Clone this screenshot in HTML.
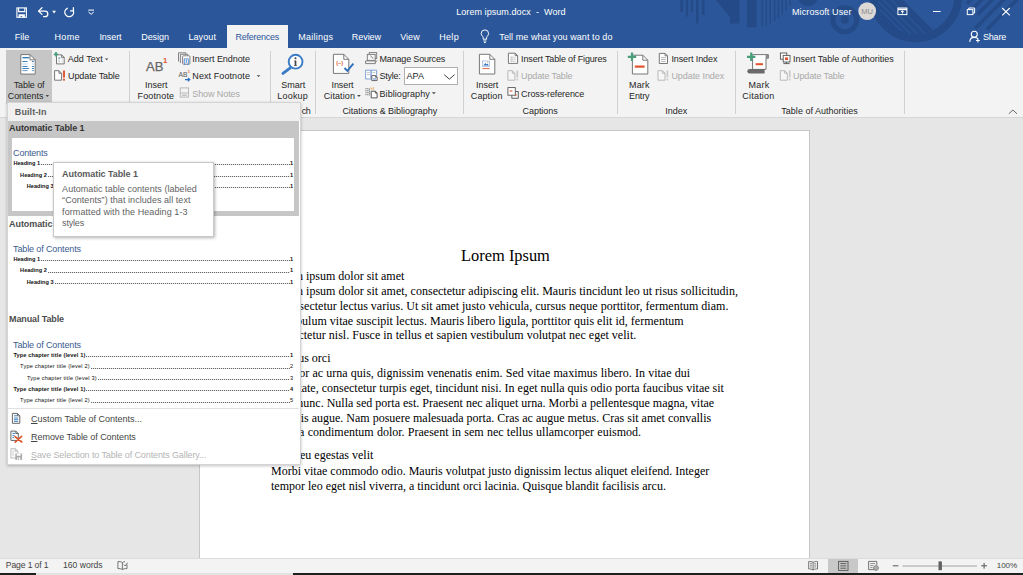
<!DOCTYPE html>
<html><head><meta charset="utf-8"><title>Lorem ipsum.docx - Word</title>
<style>
*{box-sizing:border-box;margin:0;padding:0}
html,body{width:1023px;height:575px;overflow:hidden;background:#e6e6e6}
body{position:relative;font-family:"Liberation Sans",sans-serif;font-size:9px;color:#262626}
.a{position:absolute}
.l{position:absolute;white-space:nowrap;line-height:11px;font-size:9px}
.b{font-weight:bold}
svg{position:absolute;overflow:visible}
#title{left:0;top:0;width:1023px;height:48px;background:#2b579a;overflow:hidden}
#reftab{left:227px;top:25px;width:61px;height:23px;background:#f3f3f3}
#ribbon{left:0;top:48px;width:1023px;height:70px;background:#f3f3f3;border-bottom:1px solid #d6d6d6}
.sep{position:absolute;top:51px;width:1px;height:63px;background:#d0d0d0}
#tocbtn{left:6px;top:50px;width:46px;height:54px;background:#c6c6c6}
#combo{left:404px;top:67px;width:54px;height:18px;background:#fff;border:1px solid #b0b0b0}
#page{left:199px;top:130px;width:611px;height:429px;background:#fff;border:1px solid #c6c6c6;border-bottom:none}
.t{position:absolute;white-space:nowrap;font-family:"Liberation Serif",serif;font-size:12px;line-height:14px;color:#000}
#status{left:0;top:558px;width:1023px;height:15px;background:#f3f3f3;border-top:1px solid #dcdcdc}
#plbtn{left:828px;top:559px;width:30px;height:14px;background:#c8c8c8}
.dk{position:absolute;top:573px;height:2px;background:#1f1f1f}
#dd{left:7px;top:102px;width:294px;height:363px;background:#fff;border:1px solid #d4d4d4;box-shadow:0 1px 3px rgba(0,0,0,.24)}
#ddh{left:8px;top:103px;width:292px;height:18px;background:#f0f0f0}
#sel{left:8px;top:121px;width:291px;height:95px;background:#c6c6c6}
#prev{left:12px;top:138px;width:282px;height:73px;background:#fff}
#ddsep{left:8px;top:408px;width:291px;height:1px;background:#e1e1e1}
#tt{left:53px;top:162px;width:161px;height:75px;background:#fff;border:1px solid #c8c8c8;box-shadow:1px 1px 3px rgba(0,0,0,.3)}
.h{position:absolute;white-space:nowrap;font-size:5.6px;line-height:7px;color:#111}
.dots{position:absolute;height:1px;background:repeating-linear-gradient(90deg,#666 0,#666 1px,#e4e4e4 1px,#e4e4e4 2px)}
</style></head><body>
<div id="title" class="a"><svg class="a" style="left:0;top:0" width="1023" height="48" viewBox="0 0 1023 48" ><g fill="#244b87"><rect x="680.2" y="0" width="3.0" height="12"/><rect x="685.8" y="0" width="2.4" height="16.7"/><rect x="690.8" y="0" width="2.4" height="12.3"/><rect x="696" y="0" width="2.5" height="23.4"/><rect x="702" y="0" width="2.5" height="15"/><rect x="747" y="0" width="9.6" height="27.3"/><rect x="761.5" y="0" width="1.5" height="26.4"/><rect x="765.6" y="0" width="1.4" height="25.5"/><rect x="769.6" y="0" width="1.4" height="23.8"/><rect x="773.9" y="0" width="1.4" height="21"/><rect x="777.7" y="0" width="1.5" height="18.5"/><rect x="781.6" y="0" width="1.4" height="15"/><rect x="785.5" y="0" width="1.5" height="10.5"/><rect x="789.4" y="0" width="1.4" height="5.3"/><polygon points="716,0 739.5,0 739.5,23.4 730,23.4 730,17.6"/><circle cx="808" cy="-4" r="10.2"/><circle cx="844.8" cy="19.8" r="12" fill="none" stroke="#244b87" stroke-width="5"/><circle cx="844.8" cy="19.8" r="4"/><circle cx="915.8" cy="-4.2" r="42.45" fill="none" stroke="#244b87" stroke-width="7.9"/><clipPath id="cpin"><circle cx="915.8" cy="-4.2" r="38.5"/></clipPath><g clip-path="url(#cpin)"><polygon points="903,0 953,50 850,50 850,0" fill="#244b87"/><line x1="891.4" y1="0" x2="941.4" y2="50" stroke="#2b579a" stroke-width="1.2"/><line x1="883.6" y1="0" x2="933.6" y2="50" stroke="#2b579a" stroke-width="1.2"/><line x1="876.6" y1="0" x2="926.6" y2="50" stroke="#2b579a" stroke-width="1.2"/><line x1="870.6" y1="0" x2="920.6" y2="50" stroke="#2b579a" stroke-width="1.2"/><line x1="865" y1="0" x2="915" y2="50" stroke="#2b579a" stroke-width="1.2"/></g><g stroke="#244b87" stroke-width="3.6"><line x1="974.6" y1="-4" x2="967.0" y2="3.6"/><line x1="985.5" y1="-4" x2="973.5" y2="8"/><line x1="996" y1="-4" x2="977.5" y2="14.5"/><line x1="1007.5" y1="-4" x2="975.1" y2="28.4"/><line x1="1020.5" y1="-4" x2="987.0" y2="29.5"/></g></g></svg></div>
<div id="reftab" class="a"></div>
<div id="ribbon" class="a"></div>
<div id="tocbtn" class="a"></div>
<div id="combo" class="a"></div>
<div class="sep" style="left:129px"></div><div class="sep" style="left:270px"></div><div class="sep" style="left:315px"></div><div class="sep" style="left:463px"></div><div class="sep" style="left:617px"></div><div class="sep" style="left:735px"></div><div class="sep" style="left:904px"></div>
<div id="page" class="a"></div>
<div class="t" style="top:246px;left:201px;width:609px;text-align:center;font-size:16.4px;line-height:20px">Lorem Ipsum</div>
<div class="t" style="top:269px;left:271px">Lorem ipsum dolor sit amet</div>
<div class="t" style="top:284px;left:271px;letter-spacing:0.0100px">Lorem ipsum dolor sit amet, consectetur adipiscing elit. Mauris tincidunt leo ut risus sollicitudin,</div>
<div class="t" style="top:299px;left:282px;letter-spacing:0.0106px">consectetur lectus varius. Ut sit amet justo vehicula, cursus neque porttitor, fermentum diam.</div>
<div class="t" style="top:314px;left:272px;letter-spacing:0.0112px">Vestibulum vitae suscipit lectus. Mauris libero ligula, porttitor quis elit id, fermentum</div>
<div class="t" style="top:328px;left:271px;letter-spacing:0.0127px">consectetur nisl. Fusce in tellus et sapien vestibulum volutpat nec eget velit.</div>
<div class="t" style="top:351px;left:271px">Tempus orci</div>
<div class="t" style="top:366px;left:272px;word-spacing:0.230px">Tempor ac urna quis, dignissim venenatis enim. Sed vitae maximus libero. In vitae dui</div>
<div class="t" style="top:381px;left:271px">vulputate, consectetur turpis eget, tincidunt nisi. In eget nulla quis odio porta faucibus vitae sit</div>
<div class="t" style="top:396px;left:271px">amet nunc. Nulla sed porta est. Praesent nec aliquet urna. Morbi a pellentesque magna, vitae</div>
<div class="t" style="top:411px;left:272px">lobortis augue. Nam posuere malesuada porta. Cras ac augue metus. Cras sit amet convallis</div>
<div class="t" style="top:425px;left:272.4px;word-spacing:0.260px">magna condimentum dolor. Praesent in sem nec tellus ullamcorper euismod.</div>
<div class="t" style="top:448px;left:271px">Nunc eu egestas velit</div>
<div class="t" style="top:464px;left:271px">Morbi vitae commodo odio. Mauris volutpat justo dignissim lectus aliquet eleifend. Integer</div>
<div class="t" style="top:479px;left:271px">tempor leo eget nisl viverra, a tincidunt orci lacinia. Quisque blandit facilisis arcu.</div>
<div id="status" class="a"></div>
<div id="plbtn" class="a"></div>
<div class="dk" style="left:0;width:36px"></div><div class="dk" style="left:36px;width:257px;background:#e2e2e2"></div><div class="dk" style="left:293px;width:730px"></div>
<span class="l" id="L0" style="left:456.2px;top:6.7px;color:#fff;letter-spacing:0.065px;">Lorem ipsum.docx&nbsp; -&nbsp; Word</span>
<span class="l" id="L1" style="left:792.0px;top:6.7px;color:#fff;letter-spacing:0.106px;">Microsoft User</span>
<span class="l" id="L2" style="left:14.8px;top:31.8px;color:#fff;letter-spacing:-0.029px;">File</span>
<span class="l" id="L3" style="left:54.5px;top:31.8px;color:#fff;letter-spacing:0.321px;">Home</span>
<span class="l" id="L4" style="left:99.4px;top:31.8px;color:#fff;letter-spacing:-0.069px;">Insert</span>
<span class="l" id="L5" style="left:141.2px;top:31.8px;color:#fff;letter-spacing:-0.053px;">Design</span>
<span class="l" id="L6" style="left:188.4px;top:31.8px;color:#fff;letter-spacing:0.111px;">Layout</span>
<span class="l" id="L7" style="left:235.5px;top:31.8px;color:#2b579a;letter-spacing:-0.253px;">References</span>
<span class="l" id="L8" style="left:298.3px;top:31.8px;color:#fff;letter-spacing:0.236px;">Mailings</span>
<span class="l" id="L9" style="left:351.8px;top:31.8px;color:#fff;letter-spacing:-0.053px;">Review</span>
<span class="l" id="L10" style="left:400.2px;top:31.8px;color:#fff;letter-spacing:0.035px;">View</span>
<span class="l" id="L11" style="left:439.2px;top:31.8px;color:#fff;letter-spacing:0.321px;">Help</span>
<span class="l" id="L12" style="left:499.3px;top:31.8px;color:#fff;letter-spacing:0.079px;">Tell me what you want to do</span>
<span class="l" id="L13" style="left:983.0px;top:31.8px;color:#fff;letter-spacing:-0.206px;">Share</span>
<span class="l" id="L14" style="left:13.7px;top:79.6px;color:#262626;letter-spacing:-0.091px;">Table of</span>
<span class="l" id="L15" style="left:7.7px;top:91.3px;color:#262626;letter-spacing:-0.041px;">Contents</span>
<span class="l" id="L16" style="left:67.8px;top:54.0px;color:#262626;letter-spacing:0.005px;">Add Text</span>
<span class="l" id="L17" style="left:68.1px;top:71.3px;color:#262626;letter-spacing:-0.115px;">Update Table</span>
<span class="l" id="L18" style="left:145.1px;top:79.6px;color:#262626;letter-spacing:-0.036px;">Insert</span>
<span class="l" id="L19" style="left:137.5px;top:91.3px;color:#262626;letter-spacing:0.146px;">Footnote</span>
<span class="l" id="L20" style="left:192.3px;top:54.0px;color:#262626;letter-spacing:-0.060px;">Insert Endnote</span>
<span class="l" id="L21" style="left:192.3px;top:71.3px;color:#262626;letter-spacing:0.090px;">Next Footnote</span>
<span class="l" id="L22" style="left:192.3px;top:88.5px;color:#a9a9a9;letter-spacing:-0.093px;">Show Notes</span>
<span class="l" id="L23" style="left:281.2px;top:79.6px;color:#262626;letter-spacing:0.017px;">Smart</span>
<span class="l" id="L24" style="left:277.3px;top:91.3px;color:#262626;letter-spacing:0.195px;">Lookup</span>
<span class="l" id="L25" style="left:301.8px;top:105.6px;color:#262626;letter-spacing:-0.608px;">ch</span>
<span class="l" id="L26" style="left:331.5px;top:79.6px;color:#262626;letter-spacing:-0.086px;">Insert</span>
<span class="l" id="L27" style="left:323.7px;top:91.3px;color:#262626;letter-spacing:0.098px;">Citation</span>
<span class="l" id="L28" style="left:379.5px;top:54.0px;color:#262626;letter-spacing:-0.175px;">Manage Sources</span>
<span class="l" id="L29" style="left:379.5px;top:71.3px;color:#262626;letter-spacing:-0.253px;">Style:</span>
<span class="l" id="L30" style="left:406.4px;top:71.3px;color:#262626;letter-spacing:0.085px;">APA</span>
<span class="l" id="L31" style="left:379.5px;top:88.5px;color:#262626;letter-spacing:0.064px;">Bibliography</span>
<span class="l" id="L32" style="left:342.4px;top:105.6px;color:#262626;letter-spacing:-0.028px;">Citations & Bibliography</span>
<span class="l" id="L33" style="left:476.1px;top:79.6px;color:#262626;letter-spacing:-0.069px;">Insert</span>
<span class="l" id="L34" style="left:470.8px;top:91.3px;color:#262626;letter-spacing:0.096px;">Caption</span>
<span class="l" id="L35" style="left:521.1px;top:54.0px;color:#262626;letter-spacing:-0.143px;">Insert Table of Figures</span>
<span class="l" id="L36" style="left:521.1px;top:71.3px;color:#a9a9a9;letter-spacing:-0.123px;">Update Table</span>
<span class="l" id="L37" style="left:521.1px;top:88.5px;color:#262626;letter-spacing:-0.102px;">Cross-reference</span>
<span class="l" id="L38" style="left:522.5px;top:105.6px;color:#262626;letter-spacing:-0.041px;">Captions</span>
<span class="l" id="L39" style="left:629.0px;top:79.6px;color:#262626;letter-spacing:0.175px;">Mark</span>
<span class="l" id="L40" style="left:629.0px;top:91.3px;color:#262626;letter-spacing:-0.103px;">Entry</span>
<span class="l" id="L41" style="left:671.4px;top:54.0px;color:#262626;letter-spacing:-0.094px;">Insert Index</span>
<span class="l" id="L42" style="left:671.4px;top:71.3px;color:#a9a9a9;letter-spacing:-0.062px;">Update Index</span>
<span class="l" id="L43" style="left:665.3px;top:105.6px;color:#262626;letter-spacing:-0.006px;">Index</span>
<span class="l" id="L44" style="left:748.6px;top:79.6px;color:#262626;letter-spacing:0.200px;">Mark</span>
<span class="l" id="L45" style="left:742.3px;top:91.3px;color:#262626;letter-spacing:0.211px;">Citation</span>
<span class="l" id="L46" style="left:793.1px;top:54.0px;color:#262626;letter-spacing:-0.011px;">Insert Table of Authorities</span>
<span class="l" id="L47" style="left:793.1px;top:71.3px;color:#a9a9a9;letter-spacing:-0.131px;">Update Table</span>
<span class="l" id="L48" style="left:781.3px;top:105.6px;color:#262626;letter-spacing:0.017px;">Table of Authorities</span>
<span class="l" id="L49" style="left:5.8px;top:560.1px;color:#444;font-size:8.6px;letter-spacing:-0.115px;">Page 1 of 1</span>
<span class="l" id="L50" style="left:62.9px;top:560.1px;color:#444;font-size:8.6px;letter-spacing:0.016px;">160 words</span>
<span class="l" id="L51" style="left:996.8px;top:560.3px;color:#444;font-size:8.1px;letter-spacing:-0.126px;">100%</span>
<svg class="a" style="left:0;top:0" width="1023" height="575" viewBox="0 0 1023 575" ><g fill="none" stroke="#fff" stroke-width="1.1"><rect x="16.9" y="7.9" width="9.5" height="9.4"/><path d="M18.6,8 V11.6 H24.8 V8"/></g><path d="M18.6,14.3 H24.9 V17.6 H22.3 V16 H20.5 V17.6 H18.6 Z" fill="#fff"/><g fill="none" stroke="#fff" stroke-width="1.3" stroke-linecap="round" stroke-linejoin="round"><path d="M42,7.8 L38.6,11.1 L42,14.4"/><path d="M38.8,11.1 H45 a2.8,2.8 0 0 1 0,5.6 H43.6"/></g><path d="M52.2,10.8 H56 L54.1,13.4 Z" fill="#fff"/><g fill="none" stroke="#fff" stroke-width="1.3" stroke-linecap="round" stroke-linejoin="round"><path d="M67.3,8.3 A4.4,4.4 0 1 0 73.4,10.9"/><path d="M73.4,7.7 V10.9 H70.6"/></g><path d="M88.3,10.1 H94" stroke="#fff" stroke-width="1"/><path d="M88.5,12 L91.15,14.3 L93.8,12" fill="none" stroke="#fff" stroke-width="1"/><circle cx="867.2" cy="11.1" r="8.9" fill="#dbd8d5"/><text x="867.2" y="13.9" font-size="7.6" text-anchor="middle" fill="#8c8c8c" font-family="Liberation Sans, sans-serif">MU</text><g fill="none" stroke="#fff" stroke-width="1"><rect x="897.9" y="8" width="9" height="6.6"/><path d="M898,9.4 H907" stroke-width="1.6"/><path d="M902.4,13.6 V10.9 M900.9,12.1 L902.4,10.7 L903.9,12.1"/></g><path d="M933,11.5 H940.6" stroke="#fff" stroke-width="1"/><g fill="none" stroke="#fff" stroke-width="1"><rect x="967.3" y="9.6" width="5.6" height="5"/><path d="M968.8,9.6 V8 H974.6 V13 H972.9"/></g><path d="M1002.2,8 L1009.8,15.4 M1009.8,8 L1002.2,15.4" stroke="#fff" stroke-width="1.1"/><g fill="none" stroke="#fff" stroke-width="1"><path d="M483.2,39.2 V37.6 C483.2,36.3 481.2,35.6 481.2,33.6 A3.7,3.7 0 0 1 488.6,33.6 C488.6,35.6 486.6,36.3 486.6,37.6 V39.2 Z"/><path d="M483.4,41 H486.4 M484,42.6 H485.8"/></g><g fill="none" stroke="#fff" stroke-width="1.1"><circle cx="974.3" cy="34.3" r="3"/><path d="M969.8,42 C969.8,38.6 971.6,37.4 974.3,37.4 C976,37.4 977.2,37.9 978,38.8"/><path d="M977.9,38.6 V42.4 M976,40.5 H979.8"/></g><path d="M20.8,54.6 H30.000000000000004 L35.2,59.800000000000004 V74.1 H20.8 Z" fill="#fff" stroke="#777" stroke-width="1"/><path d="M30.000000000000004,54.6 V59.800000000000004 H35.2" fill="none" stroke="#777" stroke-width="1"/><path d="M22.4,57.7 H29.2" stroke="#2e75b6" stroke-width="1.3"/><path d="M22.4,61.5 H27.6 M31.9,61.5 H33.9" stroke="#2e75b6" stroke-width="0.9" opacity="1"/><path d="M22.4,64 H27.6 M31.9,64 H33.9" stroke="#2e75b6" stroke-width="0.9" opacity="0.35"/><path d="M22.4,66.5 H27.6 M31.9,66.5 H33.9" stroke="#2e75b6" stroke-width="0.9" opacity="1"/><path d="M22.4,68.5 H29 M31.9,68.5 H33.9" stroke="#2e75b6" stroke-width="0.9" opacity="1"/><path d="M22.4,70.6 H27.6 M31.9,70.6 H33.9" stroke="#2e75b6" stroke-width="0.9" opacity="0.8"/><path d="M45.5,95.1 H49.1 L47.3,97.1 Z" fill="#4a4a4a"/><path d="M56.5,54.8 H61.6 L64.2,57.4 V63.9 H56.5 Z" fill="#fff" stroke="#777" stroke-width="1"/><path d="M61.6,54.8 V57.4 H64.2" fill="none" stroke="#777" stroke-width="1"/><path d="M58.3,58 H60.4" stroke="#2e75b6" stroke-width="0.9"/><path d="M58.3,60 H60 M58.3,61.8 H60 M61.7,58 H62.6 M61.7,60 H62.6 M61.7,61.8 H62.6" stroke="#aaa" stroke-width="0.8"/><path d="M53.8,54.3 H58.2 M56,52.099999999999994 V56.5" stroke="#4a9f7b" stroke-width="1.7"/><path d="M104.9,58.5 H108.4 L106.65,60.3 Z" fill="#4a4a4a"/><path d="M54.6,70.7 H59.0 L61.6,73.3 V80.2 H54.6 Z" fill="#fff" stroke="#777" stroke-width="1"/><path d="M59.0,70.7 V73.3 H61.6" fill="none" stroke="#777" stroke-width="1"/><path d="M64,70.4 V77.6" stroke="#e0532d" stroke-width="1.9"/><rect x="63.05" y="78.7" width="1.9" height="1.9" fill="#e0532d"/><text x="146" y="70.6" font-size="12.6" fill="#666" stroke="#666" stroke-width="0.25" font-family="Liberation Sans, sans-serif" textLength="17.4" lengthAdjust="spacingAndGlyphs">AB</text><text x="163" y="62.9" font-size="7.8" font-weight="bold" fill="#e0532d" font-family="Liberation Sans, sans-serif">1</text><g fill="#f3f3f3" stroke="#777" stroke-width="0.9"><path d="M178.5,61.5 V52.8 H185.8 V55"/><path d="M180.4,63 V54.3 H187.8 V56.5"/></g><rect x="182.6" y="55.8" width="7.3" height="8.4" rx="0.8" fill="#fff" stroke="#777" stroke-width="0.9"/><text x="186.25" y="62.5" font-size="6.4" font-weight="bold" text-anchor="middle" fill="#3f7fd0" font-family="Liberation Sans, sans-serif">(i)</text><text x="178.4" y="76.7" font-size="6.4" fill="#555" font-family="Liberation Sans, sans-serif" textLength="9" lengthAdjust="spacingAndGlyphs">AB</text><text x="187.7" y="73.1" font-size="4" font-weight="bold" fill="#e0532d" font-family="Liberation Sans, sans-serif">1</text><path d="M185,79.6 H189.6 M187.8,77.9 L189.8,79.6 L187.8,81.3" fill="none" stroke="#2f6fc1" stroke-width="1.2"/><path d="M256.7,75.2 H260.4 L258.54999999999995,77.1 Z" fill="#4a4a4a"/><g fill="none" stroke="#b9b9b9" stroke-width="1"><rect x="180.3" y="87.9" width="8.2" height="9.2"/><path d="M180.3,93 H188.5"/><path d="M182,95.2 H186.8" stroke-width="1.3"/></g><path d="M290.3,67.9 L283,73.4" stroke="#3a7cc6" stroke-width="3" stroke-linecap="round"/><circle cx="295.6" cy="61.7" r="6.9" fill="#fff" stroke="#3a7cc6" stroke-width="1.9"/><circle cx="295.5" cy="58.2" r="1.05" fill="#444"/><path d="M295.5,60.6 V65.6" stroke="#444" stroke-width="1.7"/><path d="M294.2,60.9 H295.5 M294,65.6 H297" stroke="#444" stroke-width="0.7"/><path d="M333.4,54.3 H343.8 L348.8,59.3 V73.4 H333.4 Z" fill="#fff" stroke="#777" stroke-width="1"/><path d="M343.8,54.3 V59.3 H348.8" fill="none" stroke="#777" stroke-width="1"/><text x="339.6" y="64.6" font-size="5.6" font-weight="bold" text-anchor="middle" fill="#e0532d" font-family="Liberation Sans, sans-serif">(–)</text><path d="M344.5,68 L347.3,70.9 L353.4,63.7" fill="none" stroke="#2f6fba" stroke-width="1.9"/><path d="M357.1,95 H360.8 L358.95000000000005,97 Z" fill="#4a4a4a"/><g fill="#f3f3f3" stroke="#777" stroke-width="0.9"><rect x="369.2" y="52.6" width="7.5" height="5.8"/><rect x="367.3" y="54.4" width="7.9" height="6"/><path d="M365.6,60.9 H375.3 V63.6 H365.6 Z"/></g><path d="M370.5,55.8 L373.4,58.6 M375.4,62.6 L377,60.4" stroke="#777" stroke-width="0.9"/><g fill="#fff" stroke="#7fa3d6" stroke-width="1"><path d="M365.6,70.2 H371.1 V79 H365.6 Z M371.1,70.2 H376.6 V79 H371.1 Z"/></g><path d="M367,72.6 H369.8 M367,74.6 H369.8 M372.5,72.6 H375.3" stroke="#bbb" stroke-width="0.9"/><path d="M371.8,75.6 H375.5 L377.1,77.19999999999999 V80.6 H371.8 Z" fill="#fff" stroke="#666" stroke-width="1"/><path d="M375.5,75.6 V77.19999999999999 H377.1" fill="none" stroke="#666" stroke-width="1"/><rect x="373" y="78" width="3" height="1.8" fill="#9dbbe3"/><path d="M366,88 V95.6 M367.8,88 V95.6 M369.4,88.6 V95.6" stroke="#888" stroke-width="1.1" stroke-dasharray="1.3,0.7"/><path d="M370.6,87.6 L372,89.4 M373.2,87.2 V89.6" stroke="#e8a23a" stroke-width="1"/><path d="M371.2,91.2 H375.3 L377.1,93.0 V97.9 H371.2 Z" fill="#fff" stroke="#555" stroke-width="1"/><path d="M375.3,91.2 V93.0 H377.1" fill="none" stroke="#555" stroke-width="1"/><path d="M431.9,92.2 H435.8 L433.85,94.2 Z" fill="#4a4a4a"/><path d="M444.2,74.6 L449.4,79.2 L454.6,74.6" fill="none" stroke="#444" stroke-width="1"/><path d="M479.4,54.3 H489.8 L494.8,59.3 V74 H479.4 Z" fill="#fff" stroke="#777" stroke-width="1"/><path d="M489.8,54.3 V59.3 H494.8" fill="none" stroke="#777" stroke-width="1"/><rect x="482.6" y="61" width="6.8" height="5.4" fill="#fff" stroke="#8fb4e3" stroke-width="0.7"/><path d="M483.4,65.6 L485.3,63 L486.6,64.6 L487.6,63.6 L488.8,65.6 Z" fill="#2f6fba"/><circle cx="487.8" cy="62.2" r="0.6" fill="#e8a23a"/><path d="M482.4,68.6 H489.6" stroke="#e0532d" stroke-width="0.9"/><path d="M508.4,53.2 H515.2 L517.6,55.6 V63.4 H508.4 Z" fill="#fff" stroke="#777" stroke-width="1"/><path d="M515.2,53.2 V55.6 H517.6" fill="none" stroke="#777" stroke-width="1"/><path d="M510,57.2 H516 M510,59.2 H516 M510,61.2 H516 M511.8,56.4 V62" stroke="#bbb" stroke-width="0.7"/><path d="M507.9,70.7 H512.3 L514.9,73.3 V80.2 H507.9 Z" fill="#f6f6f6" stroke="#b9b9b9" stroke-width="1"/><path d="M512.3,70.7 V73.3 H514.9" fill="none" stroke="#b9b9b9" stroke-width="1"/><path d="M517.3,70.4 V77.6" stroke="#c9c9c9" stroke-width="1.7"/><rect x="516.4499999999999" y="78.7" width="1.7" height="1.7" fill="#c9c9c9"/><rect x="507.9" y="87.6" width="7.4" height="7.6" fill="#fff" stroke="#555" stroke-width="0.9"/><path d="M509.6,91 H512.4" stroke="#e0532d" stroke-width="1.1"/><path d="M511.8,95.4 V98.3 H518.3 V91.5 H515.5" fill="none" stroke="#555" stroke-width="0.9"/><rect x="515" y="94.2" width="1.5" height="1.4" fill="#e0532d"/><path d="M632.4,55.2 H642.8 L647.8,60.2 V74 H632.4 Z" fill="#fff" stroke="#777" stroke-width="1"/><path d="M642.8,55.2 V60.2 H647.8" fill="none" stroke="#777" stroke-width="1"/><path d="M634.8,66.6 H644.6" stroke="#e0532d" stroke-width="2.2"/><path d="M627.8,56.8 H636.2 M632,52.599999999999994 V61.0" stroke="#4a9f7b" stroke-width="2.2"/><path d="M659.3,53.4 H665.1 L667.5,55.8 V63.5 H659.3 Z" fill="#fff" stroke="#777" stroke-width="1"/><path d="M665.1,53.4 V55.8 H667.5" fill="none" stroke="#777" stroke-width="1"/><path d="M661,57.6 H665.8 M661,59.5 H665.8 M661,61.4 H665.8" stroke="#999" stroke-width="0.7"/><path d="M658,70.7 H662.4 L665,73.3 V80.2 H658 Z" fill="#f6f6f6" stroke="#b9b9b9" stroke-width="1"/><path d="M662.4,70.7 V73.3 H665" fill="none" stroke="#b9b9b9" stroke-width="1"/><path d="M667.4,70.4 V77.6" stroke="#c9c9c9" stroke-width="1.7"/><rect x="666.55" y="78.7" width="1.7" height="1.7" fill="#c9c9c9"/><path d="M752.6,54.6 H768.4 V58.2 H766 V69.4 H752.6 Z" fill="#fff" stroke="#777" stroke-width="1"/><path d="M765.6,54.6 H768.4 V58.2 H765.6 Z" fill="#8a8a8a"/><path d="M749.6,69 H764.6 V73.6 H749.6 a2.3,2.3 0 0 1 0,-4.6 Z" fill="#6a6a6a"/><path d="M755.6,64.2 H763" stroke="#e0532d" stroke-width="2"/><path d="M747.0,56.8 H755.4000000000001 M751.2,52.599999999999994 V61.0" stroke="#4a9f7b" stroke-width="2.2"/><g fill="#fff" stroke="#555" stroke-width="0.9"><rect x="780.4" y="53" width="6.4" height="6.2"/><rect x="783.2" y="55.4" width="6.8" height="6.6"/></g><rect x="785" y="57.4" width="3" height="2.6" fill="#e0532d"/><path d="M783.4,63.6 H789.6 M786.4,62 V63.6" stroke="#555" stroke-width="0.9"/><path d="M780.3,70.7 H784.6999999999999 L787.3,73.3 V80.2 H780.3 Z" fill="#f6f6f6" stroke="#b9b9b9" stroke-width="1"/><path d="M784.6999999999999,70.7 V73.3 H787.3" fill="none" stroke="#b9b9b9" stroke-width="1"/><path d="M789.6999999999999,70.4 V77.6" stroke="#c9c9c9" stroke-width="1.7"/><rect x="788.8499999999999" y="78.7" width="1.7" height="1.7" fill="#c9c9c9"/><path d="M1008.8,113.8 L1012.9,110 L1017,113.8" fill="none" stroke="#666" stroke-width="1"/><g fill="none" stroke="#666" stroke-width="0.9"><path d="M122.4,562.6 C121,561.6 119.4,561.5 117.9,561.6 V568.6 C119.4,568.5 121,568.6 122.4,569.6 Z"/><path d="M122.4,562.6 C123.2,562 124,561.7 125,561.6 M122.4,569.6 C123.4,568.9 124.4,568.6 125.4,568.6 H127 V564.5"/><path d="M124,564.6 L125.2,566 L127.6,562.6"/></g><g fill="none" stroke="#666" stroke-width="0.9"><path d="M813.1,562.3 C811.6,561.5 810.2,561.4 808.7,561.5 V569 C810.2,568.9 811.6,569 813.1,569.9 C814.6,569 816,568.9 817.5,569 V561.5 C816,561.4 814.6,561.5 813.1,562.3 Z M813.1,562.3 V569.9"/><path d="M810,563.6 H811.9 M810,565.3 H811.9 M810,567 H811.9 M814.3,563.6 H816.2 M814.3,565.3 H816.2 M814.3,567 H816.2" stroke-width="0.7"/></g><g fill="none" stroke="#555" stroke-width="0.9"><rect x="838.6" y="561.4" width="9.4" height="9"/><path d="M840.3,563.6 H846.3 M840.3,565.9 H846.3 M840.3,568.2 H846.3"/></g><g fill="none" stroke="#666" stroke-width="0.9"><path d="M874.4,569.6 H868.6 V561.4 H876.8 V565"/><path d="M870.2,563.6 H875.2 M870.2,565.6 H873.4 M870.2,567.6 H872.6" stroke-width="0.7"/><circle cx="876" cy="568" r="2.3" fill="#f3f3f3"/><path d="M873.7,568 H878.3 M876,565.7 V570.3" stroke-width="0.6"/></g><path d="M892.8,565.8 H898.4 M981.2,565.8 H987 M984.1,562.9 V568.7" stroke="#555" stroke-width="1"/><path d="M902.5,566 H977" stroke="#a0a0a0" stroke-width="1"/><rect x="938.5" y="561.4" width="3.4" height="8.8" fill="#606060"/></svg>
<div id="dd" class="a"></div>
<div id="ddh" class="a"></div>
<div id="sel" class="a"></div>
<div id="prev" class="a"></div>
<div class="a" style="left:8px;top:396px;width:291px;height:12px;overflow:hidden"></div>
<span class="h" style="left:13.4px;top:160.2px;font-weight:bold;">Heading 1</span>
<div class="dots" style="left:41px;top:164.4px;width:249.0px"></div>
<span class="h" style="left:290px;top:160.2px;font-weight:bold">1</span>
<span class="h" style="left:20.1px;top:171.5px;font-weight:bold;">Heading 2</span>
<div class="dots" style="left:48px;top:175.7px;width:242.0px"></div>
<span class="h" style="left:290px;top:171.5px;font-weight:bold">1</span>
<span class="h" style="left:26.8px;top:182.8px;font-weight:bold;">Heading 3</span>
<div class="dots" style="left:54.5px;top:187.0px;width:235.5px"></div>
<span class="h" style="left:290px;top:182.8px;font-weight:bold">1</span>
<span class="h" style="left:13.4px;top:256.1px;font-weight:bold;">Heading 1</span>
<div class="dots" style="left:41px;top:260.3px;width:249.0px"></div>
<span class="h" style="left:290px;top:256.1px;font-weight:bold">1</span>
<span class="h" style="left:20.1px;top:267.4px;font-weight:bold;">Heading 2</span>
<div class="dots" style="left:48px;top:271.6px;width:242.0px"></div>
<span class="h" style="left:290px;top:267.4px;font-weight:bold">1</span>
<span class="h" style="left:26.8px;top:278.7px;font-weight:bold;">Heading 3</span>
<div class="dots" style="left:54.5px;top:282.9px;width:235.5px"></div>
<span class="h" style="left:290px;top:278.7px;font-weight:bold">1</span>
<span class="h" style="left:13.4px;top:352.0px;font-weight:bold;letter-spacing:0.135px;">Type chapter title (level 1)</span>
<div class="dots" style="left:86px;top:356.2px;width:204.0px"></div>
<span class="h" style="left:290px;top:352.0px;font-weight:bold">1</span>
<span class="h" style="left:20.1px;top:363.3px;letter-spacing:0.205px;">Type chapter title (level 2)</span>
<div class="dots" style="left:90.5px;top:367.5px;width:199.5px"></div>
<span class="h" style="left:290px;top:363.3px;font-weight:normal">2</span>
<span class="h" style="left:27px;top:374.9px;letter-spacing:0.205px;">Type chapter title (level 3)</span>
<div class="dots" style="left:97.5px;top:379.1px;width:192.5px"></div>
<span class="h" style="left:290px;top:374.9px;font-weight:normal">3</span>
<span class="h" style="left:13.4px;top:386.2px;font-weight:bold;letter-spacing:0.135px;">Type chapter title (level 1)</span>
<div class="dots" style="left:86px;top:390.4px;width:204.0px"></div>
<span class="h" style="left:290px;top:386.2px;font-weight:bold">4</span>
<span class="h" style="left:20.1px;top:397.4px;letter-spacing:0.205px;">Type chapter title (level 2)</span>
<div class="dots" style="left:90.5px;top:401.6px;width:199.5px"></div>
<span class="h" style="left:290px;top:397.4px;font-weight:normal">5</span>
<div class="a" style="left:8px;top:403px;width:291px;height:5px;background:#fff"></div>
<div id="ddsep" class="a"></div>
<span class="l b" id="D0" style="left:14.8px;top:106.5px;color:#5e5e5e;letter-spacing:0.087px;">Built-In</span>
<span class="l b" id="D1" style="left:9.1px;top:122.7px;color:#333;letter-spacing:-0.086px;">Automatic Table 1</span>
<span class="l" id="D2" style="left:13.1px;top:147.9px;color:#3a5a90;letter-spacing:-0.204px;">Contents</span>
<span class="l b" id="D3" style="left:9.1px;top:218.5px;color:#4d4d4d;letter-spacing:-0.086px;">Automatic Table 2</span>
<span class="l" id="D4" style="left:13.1px;top:243.7px;color:#3a5a90;letter-spacing:-0.126px;">Table of Contents</span>
<span class="l b" id="D5" style="left:9.1px;top:314.4px;color:#4d4d4d;letter-spacing:-0.120px;">Manual Table</span>
<span class="l" id="D6" style="left:13.1px;top:339.6px;color:#3a5a90;letter-spacing:-0.126px;">Table of Contents</span>
<span class="l" id="D7" style="left:31.0px;top:413.5px;color:#444;letter-spacing:0.007px;"><u>C</u>ustom Table of Contents...</span>
<span class="l" id="D8" style="left:31.0px;top:431.5px;color:#444;letter-spacing:-0.046px;"><u>R</u>emove Table of Contents</span>
<span class="l" id="D9" style="left:31.0px;top:449.5px;color:#b4b4b4;letter-spacing:-0.110px;"><u>S</u>ave Selection to Table of Contents Gallery...</span>
<svg class="a" style="left:0;top:0" width="1023" height="575" viewBox="0 0 1023 575" ><path d="M12.4,413.4 H17.400000000000002 L19.8,415.79999999999995 V423.3 H12.4 Z" fill="#fff" stroke="#666" stroke-width="1"/><path d="M17.400000000000002,413.4 V415.79999999999995 H19.8" fill="none" stroke="#666" stroke-width="1"/><path d="M14,415.8 H17 M14,418 H18.2 M14,419.7 H18.2 M14,421.4 H18.2" stroke="#2e75b6" stroke-width="0.9"/><path d="M10.9,431.1 H15.9 L18.3,433.5 V440.4 H10.9 Z" fill="#fff" stroke="#666" stroke-width="1"/><path d="M15.9,431.1 V433.5 H18.3" fill="none" stroke="#666" stroke-width="1"/><path d="M12.4,433.4 H15.4 M12.4,435.6 H14.6 M12.4,437.6 H14" stroke="#2e75b6" stroke-width="0.9"/><path d="M15,436.6 L21.8,442 M21.6,436.4 L15.2,442.2" stroke="#d9532c" stroke-width="1.6" stroke-linecap="round"/><path d="M10.9,448.7 H15.499999999999998 L17.9,451.09999999999997 V458 H10.9 Z" fill="#fafafa" stroke="#bdbdbd" stroke-width="1"/><path d="M15.499999999999998,448.7 V451.09999999999997 H17.9" fill="none" stroke="#bdbdbd" stroke-width="1"/><path d="M12.4,451 H14.6 M12.4,453 H14 M12.4,455 H14" stroke="#c8c8c8" stroke-width="0.9"/><rect x="15.3" y="453.5" width="6.8" height="6.4" fill="#adadad"/><rect x="16.8" y="453.5" width="3.8" height="2.2" fill="#fff"/><rect x="17.2" y="457.6" width="3" height="2.3" fill="#fff"/><rect x="17.9" y="458.2" width="1" height="1.7" fill="#adadad"/></svg>
<div id="tt" class="a"></div>
<span class="l b" id="T0" style="left:62.1px;top:168.7px;color:#5a5a5a;letter-spacing:-0.062px;">Automatic Table 1</span>
<span class="l" id="T1" style="left:62.1px;top:184.4px;color:#5f5f5f;letter-spacing:0.049px;">Automatic table contents (labeled</span>
<span class="l" id="T2" style="left:62.1px;top:195.4px;color:#5f5f5f;letter-spacing:0.054px;">“Contents”) that includes all text</span>
<span class="l" id="T3" style="left:62.1px;top:206.5px;color:#5f5f5f;letter-spacing:0.081px;">formatted with the Heading 1-3</span>
<span class="l" id="T4" style="left:62.1px;top:217.7px;color:#5f5f5f;letter-spacing:-0.186px;">styles</span>
</body></html>
